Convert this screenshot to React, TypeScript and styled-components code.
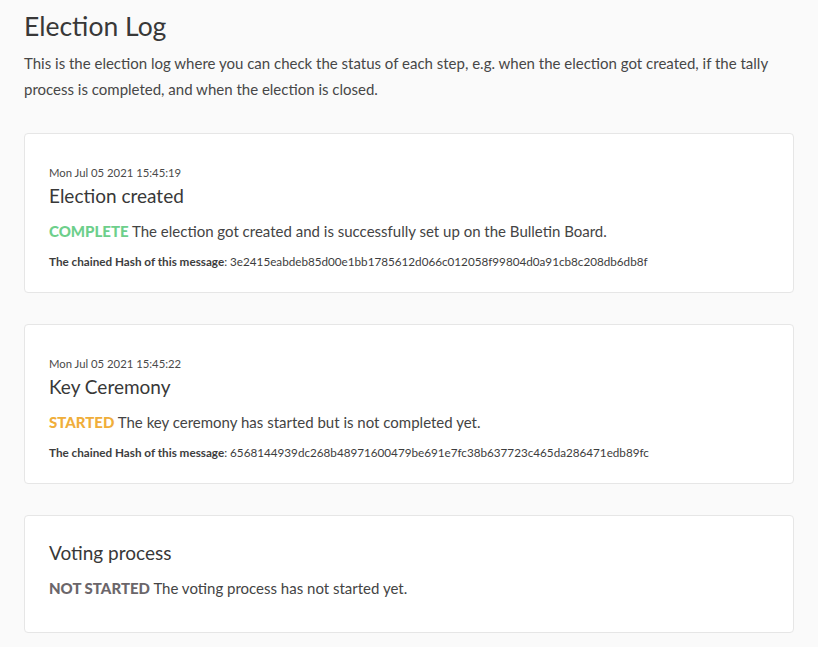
import React from "react";
import styled, { createGlobalStyle } from "styled-components";

const Global = createGlobalStyle`
  html, body { margin: 0; padding: 0; background: #fafafa; }
  body { font-family: "Source Sans Pro", Lato, "Noto Sans", sans-serif; color: #3d3d3d; }
  * { box-sizing: border-box; }
`;

const Page = styled.main`
  padding: 8px 24px 24px;
  display: flex;
  flex-direction: column;
`;

const Title = styled.h1`
  margin: 0;
  font-size: 26.5px;
  line-height: 36px;
  font-weight: 400;
  color: #383838;
`;

const Intro = styled.p`
  margin: 6px 0 31px;
  font-size: 15px;
  line-height: 26px;
  color: #474747;
`;

const List = styled.div`
  display: flex;
  flex-direction: column;
  gap: 31px;
`;

const Card = styled.section`
  background: #fff;
  border: 1px solid #e6e6e6;
  border-radius: 4px;
  padding: 23px 24px 22px;
  display: flex;
  flex-direction: column;
`;

const Date = styled.div`
  margin-top: 7px;
  font-size: 11.3px;
  line-height: 18px;
  color: #4a4a4a;
`;

const StepTitle = styled.h2`
  margin: 0;
  font-size: 19px;
  line-height: 28px;
  font-weight: 400;
  color: #383838;
`;

const Status = styled.p`
  margin: 9px 0 9px;
  font-size: 15px;
  line-height: 24px;
  color: #444;
  &:last-child { margin-bottom: 10px; }
`;

const Badge = styled.span<{ $color: string }>`
  font-weight: 900;
  color: ${(p) => p.$color};
`;

const Hash = styled.p`
  margin: 0;
  font-size: 11.7px;
  line-height: 18px;
  color: #3d3d3d;
  b { font-weight: 700; }
`;

type Step = {
  date?: string;
  title: string;
  status: string;
  color: string;
  text: string;
  hash?: string;
};

const steps: Step[] = [
  {
    date: "Mon Jul 05 2021 15:45:19",
    title: "Election created",
    status: "COMPLETE",
    color: "#6dcf8b",
    text: "The election got created and is successfully set up on the Bulletin Board.",
    hash: "3e2415eabdeb85d00e1bb1785612d066c012058f99804d0a91cb8c208db6db8f",
  },
  {
    date: "Mon Jul 05 2021 15:45:22",
    title: "Key Ceremony",
    status: "STARTED",
    color: "#f0ae3a",
    text: "The key ceremony has started but is not completed yet.",
    hash: "6568144939dc268b48971600479be691e7fc38b637723c465da286471edb89fc",
  },
  {
    title: "Voting process",
    status: "NOT STARTED",
    color: "#6b666a",
    text: "The voting process has not started yet.",
  },
];

export default function App() {
  return (
    <>
      <Global />
      <Page>
        <Title>Election Log</Title>
        <Intro>
          This is the election log where you can check the status of each step, e.g. when the election got created, if the tally
          process is completed, and when the election is closed.
        </Intro>
        <List>
          {steps.map((s) => (
            <Card key={s.title}>
              {s.date && <Date>{s.date}</Date>}
              <StepTitle>{s.title}</StepTitle>
              <Status>
                <Badge $color={s.color}>{s.status}</Badge> {s.text}
              </Status>
              {s.hash && (
                <Hash>
                  <b>The chained Hash of this message</b>: {s.hash}
                </Hash>
              )}
            </Card>
          ))}
        </List>
      </Page>
    </>
  );
}
